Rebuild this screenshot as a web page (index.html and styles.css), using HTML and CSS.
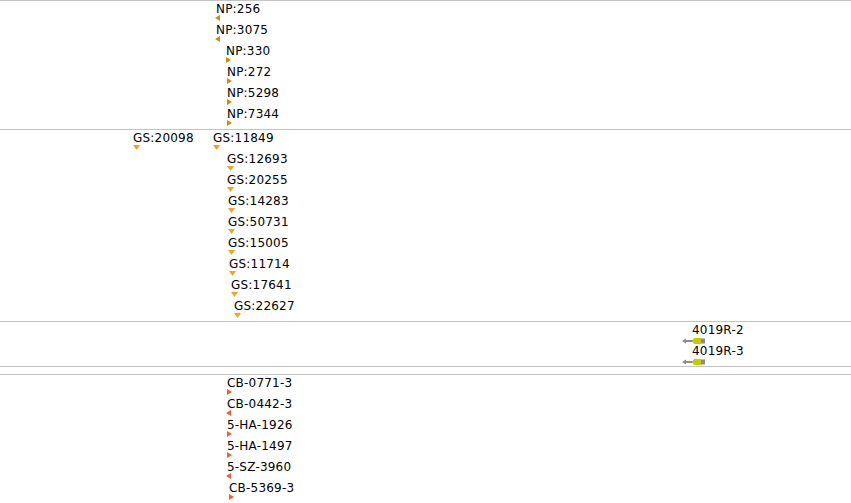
FILE: index.html
```html
<!DOCTYPE html>
<html lang="en">
<head>
    <meta charset="UTF-8">
    <title>Tracks</title>
    <link rel="stylesheet" href="styles.css">
</head>
<body>
    <div class="tracks">
      <!-- NP track -->
      <section class="track">
        <div class="row"><div class="feature" style="left:216px"><span class="label">NP:256</span><i class="mark rev np"></i></div></div>
        <div class="row"><div class="feature" style="left:216px"><span class="label">NP:3075</span><i class="mark rev np"></i></div></div>
        <div class="row"><div class="feature" style="left:226px"><span class="label">NP:330</span><i class="mark fwd np"></i></div></div>
        <div class="row"><div class="feature" style="left:227px"><span class="label">NP:272</span><i class="mark fwd np"></i></div></div>
        <div class="row"><div class="feature" style="left:227px"><span class="label">NP:5298</span><i class="mark fwd np"></i></div></div>
        <div class="row"><div class="feature" style="left:227px"><span class="label">NP:7344</span><i class="mark fwd np"></i></div></div>
      </section>

      <!-- GS track -->
      <section class="track">
        <div class="row">
          <div class="feature" style="left:133px"><span class="label">GS:20098</span><i class="mark down gs"></i></div>
          <div class="feature" style="left:213px"><span class="label">GS:11849</span><i class="mark down gs"></i></div>
        </div>
        <div class="row"><div class="feature" style="left:227px"><span class="label">GS:12693</span><i class="mark down gs"></i></div></div>
        <div class="row"><div class="feature" style="left:227px"><span class="label">GS:20255</span><i class="mark down gs"></i></div></div>
        <div class="row"><div class="feature" style="left:228px"><span class="label">GS:14283</span><i class="mark down gs"></i></div></div>
        <div class="row"><div class="feature" style="left:228px"><span class="label">GS:50731</span><i class="mark down gs"></i></div></div>
        <div class="row"><div class="feature" style="left:228px"><span class="label">GS:15005</span><i class="mark down gs"></i></div></div>
        <div class="row"><div class="feature" style="left:229px"><span class="label">GS:11714</span><i class="mark down gs"></i></div></div>
        <div class="row"><div class="feature" style="left:231px"><span class="label">GS:17641</span><i class="mark down gs"></i></div></div>
        <div class="row"><div class="feature" style="left:234px"><span class="label">GS:22627</span><i class="mark down gs"></i></div></div>
      </section>

      <!-- primer track -->
      <section class="track">
        <div class="row">
          <div class="feature" style="left:682px"><span class="label shifted">4019R-2</span>
            <svg class="primer" width="24" height="6" viewBox="0 0 24 6">
              <polygon points="0,3 4,0.5 4,5.5" fill="#8c8c8c"/>
              <rect x="3" y="2" width="8" height="2" fill="#8c8c8c"/>
              <polygon points="10,3 12,0 19,0 19,6 12,6" fill="#c2cc00"/>
              <rect x="19" y="0.5" width="4" height="5" fill="#8c8c8c"/>
            </svg>
          </div>
        </div>
        <div class="row">
          <div class="feature" style="left:682px"><span class="label shifted">4019R-3</span>
            <svg class="primer" width="24" height="6" viewBox="0 0 24 6">
              <polygon points="0,3 4,0.5 4,5.5" fill="#8c8c8c"/>
              <rect x="3" y="2" width="8" height="2" fill="#8c8c8c"/>
              <polygon points="10,3 12,0 19,0 19,6 12,6" fill="#c2cc00"/>
              <rect x="19" y="0.5" width="4" height="5" fill="#8c8c8c"/>
            </svg>
          </div>
        </div>
      </section>

      <!-- empty track -->
      <section class="track empty"></section>

      <!-- CB track -->
      <section class="track">
        <div class="row"><div class="feature" style="left:227px"><span class="label">CB-0771-3</span><i class="mark fwd cb"></i></div></div>
        <div class="row"><div class="feature" style="left:227px"><span class="label">CB-0442-3</span><i class="mark rev cb"></i></div></div>
        <div class="row"><div class="feature" style="left:227px"><span class="label">5-HA-1926</span><i class="mark fwd cb"></i></div></div>
        <div class="row"><div class="feature" style="left:227px"><span class="label">5-HA-1497</span><i class="mark fwd cb"></i></div></div>
        <div class="row"><div class="feature" style="left:227px"><span class="label">5-SZ-3960</span><i class="mark rev cb"></i></div></div>
        <div class="row"><div class="feature" style="left:229px"><span class="label">CB-5369-3</span><i class="mark fwd cb"></i></div></div>
      </section>
    </div>
</body>
</html>
```

FILE: styles.css
```css
body {
    margin: 0;
    background-color: #fff;
    font-family: "DejaVu Sans", sans-serif;
    font-size: 12px;
    color: #000;
}
.tracks {
    width: 851px;
    border-bottom: 1px solid #c4c4c4;
}
.track {
    border-top: 1px solid #c4c4c4;
    padding: 1px 0;
}
.track.empty {
    height: 5px;
}
.row {
    position: relative;
    height: 21px;
}
.feature {
    position: absolute;
    top: 0;
}
.label {
    display: block;
    height: 12px;
    padding-top: 1px;
    line-height: 13px;
    letter-spacing: 0.2px;
    white-space: nowrap;
}
.label.shifted {
    padding-left: 10px;
}
.primer {
    display: block;
    margin-top: 2px;
}

/* strand markers */
.mark {
    display: block;
    width: 5px;
    height: 6px;
    background-color: currentColor;
}
.mark.fwd {
    clip-path: polygon(0 0, 100% 50%, 0 100%);
}
.mark.rev {
    margin-left: -1px;
    clip-path: polygon(100% 0, 0 50%, 100% 100%);
}
.mark.down {
    width: 7px;
    height: 5px;
    margin-top: 1px;
    clip-path: polygon(0 0, 100% 0, 50% 100%);
}
.np { color: #d08c08; }
.gs { color: #f0a428; }
.cb { color: #f05c3c; }
```
